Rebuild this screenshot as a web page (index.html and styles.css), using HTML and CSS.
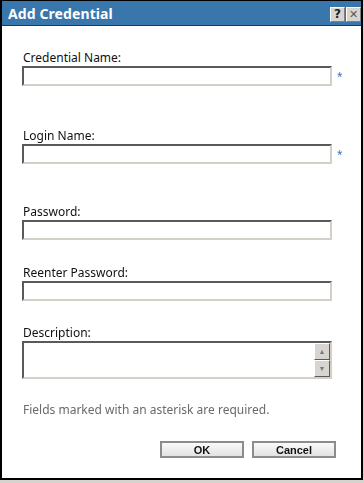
FILE: index.html
```html
<!DOCTYPE html>
<html lang="en">
<head>
    <meta charset="UTF-8">
    <title>Add Credential</title>
    <link rel="stylesheet" href="styles.css">
</head>
<body>
    <div class="dialog">
        <header class="title_bar">
            <span class="title">Add Credential</span>
            <div class="title_buttons">
                <span class="tb_btn">?</span>
                <span class="tb_btn tb_close">&#x2715;</span>
            </div>
        </header>
        <main class="content">
            <div class="field field_first">
                <label>Credential Name:</label>
                <div class="row">
                    <input type="text" class="text_input" autofocus>
                    <span class="required">*</span>
                </div>
            </div>
            <div class="field field_wide">
                <label>Login Name:</label>
                <div class="row">
                    <input type="text" class="text_input">
                    <span class="required">*</span>
                </div>
            </div>
            <div class="field field_pass">
                <label>Password:</label>
                <div class="row">
                    <input type="password" class="text_input">
                </div>
            </div>
            <div class="field">
                <label>Reenter Password:</label>
                <div class="row">
                    <input type="password" class="text_input">
                </div>
            </div>
            <div class="field field_desc">
                <label>Description:</label>
                <div class="row">
                    <div class="text_area">
                        <textarea></textarea>
                        <div class="scroll">
                            <span class="scroll_btn">&#9650;</span>
                            <span class="scroll_btn">&#9660;</span>
                        </div>
                    </div>
                </div>
            </div>
            <p class="note">Fields marked with an asterisk are required.</p>
            <div class="actions">
                <button class="btn">OK</button>
                <button class="btn">Cancel</button>
            </div>
        </main>
    </div>
</body>
</html>
```

FILE: styles.css
```css
body {
    margin: 0;
    background-color: #d6d3ce;
    font-family: "Noto Sans", "Liberation Sans", sans-serif;
}
.dialog {
    box-sizing: border-box;
    width: 363px;
    height: 480px;
    border: 2px solid #000;
    border-top-width: 1px;
    background-color: #fff;
}
.title_bar {
    display: flex;
    align-items: center;
    justify-content: space-between;
    height: 24px;
    padding: 0 0 0 6px;
    background-color: #3876ab;
    border-bottom: 1px solid #1d3b58;
}
.title {
    color: #fff;
    font-size: 14px;
    font-weight: bold;
    letter-spacing: 0.1px;
}
.title_buttons {
    display: flex;
    gap: 1px;
    margin-top: 2px;
}
.tb_btn {
    box-sizing: border-box;
    display: flex;
    align-items: center;
    justify-content: center;
    width: 15px;
    height: 15px;
    background-color: #d8d5d0;
    border: 1px solid;
    border-color: #fff #808080 #808080 #fff;
    color: #222;
    font-family: "DejaVu Sans", sans-serif;
    font-size: 12px;
    font-weight: bold;
    line-height: 1;
}
.tb_close {
    font-weight: normal;
    font-size: 11px;
    color: #555;
}
.content {
    padding: 0 25px 0 20px;
}
.field {
    margin-top: 25px;
}
.field_first {
    margin-top: 24px;
}
.field_wide {
    margin-top: 42px;
}
.field_pass {
    margin-top: 40px;
}
.field_desc {
    margin-top: 24px;
}
.field label {
    display: block;
    height: 16px;
    font-size: 12px;
    line-height: 16px;
    color: #111;
    padding-left: 1px;
}
.row {
    display: flex;
    align-items: center;
}
.text_input {
    box-sizing: border-box;
    flex-shrink: 0;
    width: 310px;
    height: 20px;
    margin: 0;
    border: 2px solid;
    border-color: #5a5a5a #d4d0c8 #d4d0c8 #5a5a5a;
    outline: none;
    background-color: #fff;
}
.required {
    margin-left: 5px;
    color: #3a6fc0;
    font-size: 10px;
    line-height: 10px;
}
.text_area {
    box-sizing: border-box;
    display: flex;
    flex-shrink: 0;
    width: 310px;
    height: 38px;
    border: 2px solid;
    border-color: #5a5a5a #d4d0c8 #d4d0c8 #5a5a5a;
}
.text_area textarea {
    flex: 1;
    border: none;
    resize: none;
    outline: none;
    padding: 0;
}
.scroll {
    display: flex;
    flex-direction: column;
    width: 16px;
    background: repeating-linear-gradient(45deg, #ddd 0 1px, #fff 1px 2px);
}
.scroll_btn {
    box-sizing: border-box;
    display: flex;
    align-items: center;
    justify-content: center;
    height: 17px;
    background-color: #d8d5d0;
    border: 1px solid;
    border-color: #fff #5a5a5a #5a5a5a #fff;
    color: #7a7a7a;
    font-size: 7px;
}
.scroll_btn + .scroll_btn {
    margin-top: auto;
}
.note {
    margin: 22px 0 0 1px;
    font-size: 12px;
    color: #6a6a6a;
}
.actions {
    display: flex;
    justify-content: flex-end;
    gap: 8px;
    margin-top: 23px;
}
.btn {
    box-sizing: border-box;
    width: 84px;
    height: 17px;
    padding: 0;
    border: 2px solid #8c8c8c;
    background: linear-gradient(#fafafa, #e2e2e2);
    font-family: "Liberation Sans", Arial, sans-serif;
    font-size: 11px;
    font-weight: bold;
    color: #111;
}
```
